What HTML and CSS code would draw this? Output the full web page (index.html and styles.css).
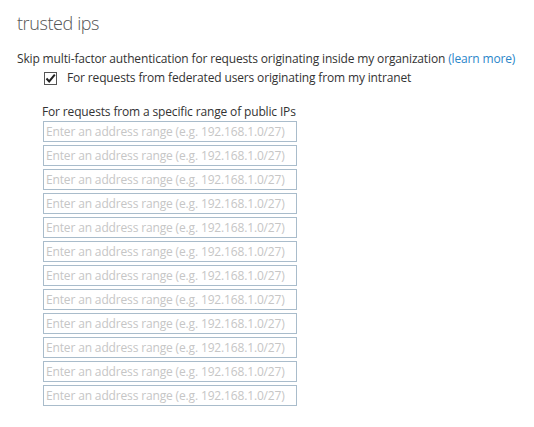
FILE: index.html
```html
<!DOCTYPE html>
<html>
<head>
<meta charset="utf-8">
<link rel="stylesheet" href="styles.css">
</head>
<body>
<div class="page">
  <h1 class="title">trusted ips</h1>
  <p class="desc">Skip multi-factor authentication for requests originating inside my organization <a class="link" href="#">(learn more)</a></p>
  <label class="check-row">
    <span class="box"><svg width="13" height="13" viewBox="0 0 13 13"><rect x="0.5" y="0.5" width="12" height="12" fill="#fff" stroke="#555"/><path d="M2.5 6.5 L5.2 9.5 L10.8 2.6" fill="none" stroke="#222" stroke-width="2"/></svg></span>
    <span>For requests from federated users originating from my intranet</span>
  </label>
  <div class="range">
    <div class="range-label">For requests from a specific range of public IPs</div>
    <div class="inputs">
      <input class="ip" placeholder="Enter an address range (e.g. 192.168.1.0/27)">
      <input class="ip" placeholder="Enter an address range (e.g. 192.168.1.0/27)">
      <input class="ip" placeholder="Enter an address range (e.g. 192.168.1.0/27)">
      <input class="ip" placeholder="Enter an address range (e.g. 192.168.1.0/27)">
      <input class="ip" placeholder="Enter an address range (e.g. 192.168.1.0/27)">
      <input class="ip" placeholder="Enter an address range (e.g. 192.168.1.0/27)">
      <input class="ip" placeholder="Enter an address range (e.g. 192.168.1.0/27)">
      <input class="ip" placeholder="Enter an address range (e.g. 192.168.1.0/27)">
      <input class="ip" placeholder="Enter an address range (e.g. 192.168.1.0/27)">
      <input class="ip" placeholder="Enter an address range (e.g. 192.168.1.0/27)">
      <input class="ip" placeholder="Enter an address range (e.g. 192.168.1.0/27)">
      <input class="ip" placeholder="Enter an address range (e.g. 192.168.1.0/27)">
    </div>
  </div>
</div>
</body>
</html>
```
FILE: styles.css
```css
html, body { margin: 0; padding: 0; background: #fff; }
body { font-family: "Open Sans", "Noto Sans", sans-serif; color: #333; font-size: 12px; }
.page { padding: 10px 0 0 17px; }
.title { margin: 0; font-weight: 300; font-size: 18px; color: #555; line-height: 26px; letter-spacing: -0.4px; }
.desc { margin: 15px 0 0 0; line-height: 16px; letter-spacing: -0.15px; }
.link { color: #2a86c9; text-decoration: none; }
.check-row { display: flex; align-items: center; gap: 10px; margin: 3px 0 0 27px; line-height: 16px; letter-spacing: -0.15px; }
.box { display: flex; width: 13px; height: 13px; }
.range { margin: 18px 0 0 25px; }
.range-label { line-height: 16px; letter-spacing: -0.15px; }
.inputs { display: flex; flex-direction: column; gap: 3px; margin-top: 1px; }
.ip { box-sizing: border-box; width: 254px; height: 21px; margin: 0 0 0 1px; padding: 0 2px; border: 1px solid #a9bccb; border-radius: 0; font-family: inherit; font-size: 12px; color: #333; outline: none; letter-spacing: -0.15px; }
.ip::placeholder { color: #c6c6c6; }
```
